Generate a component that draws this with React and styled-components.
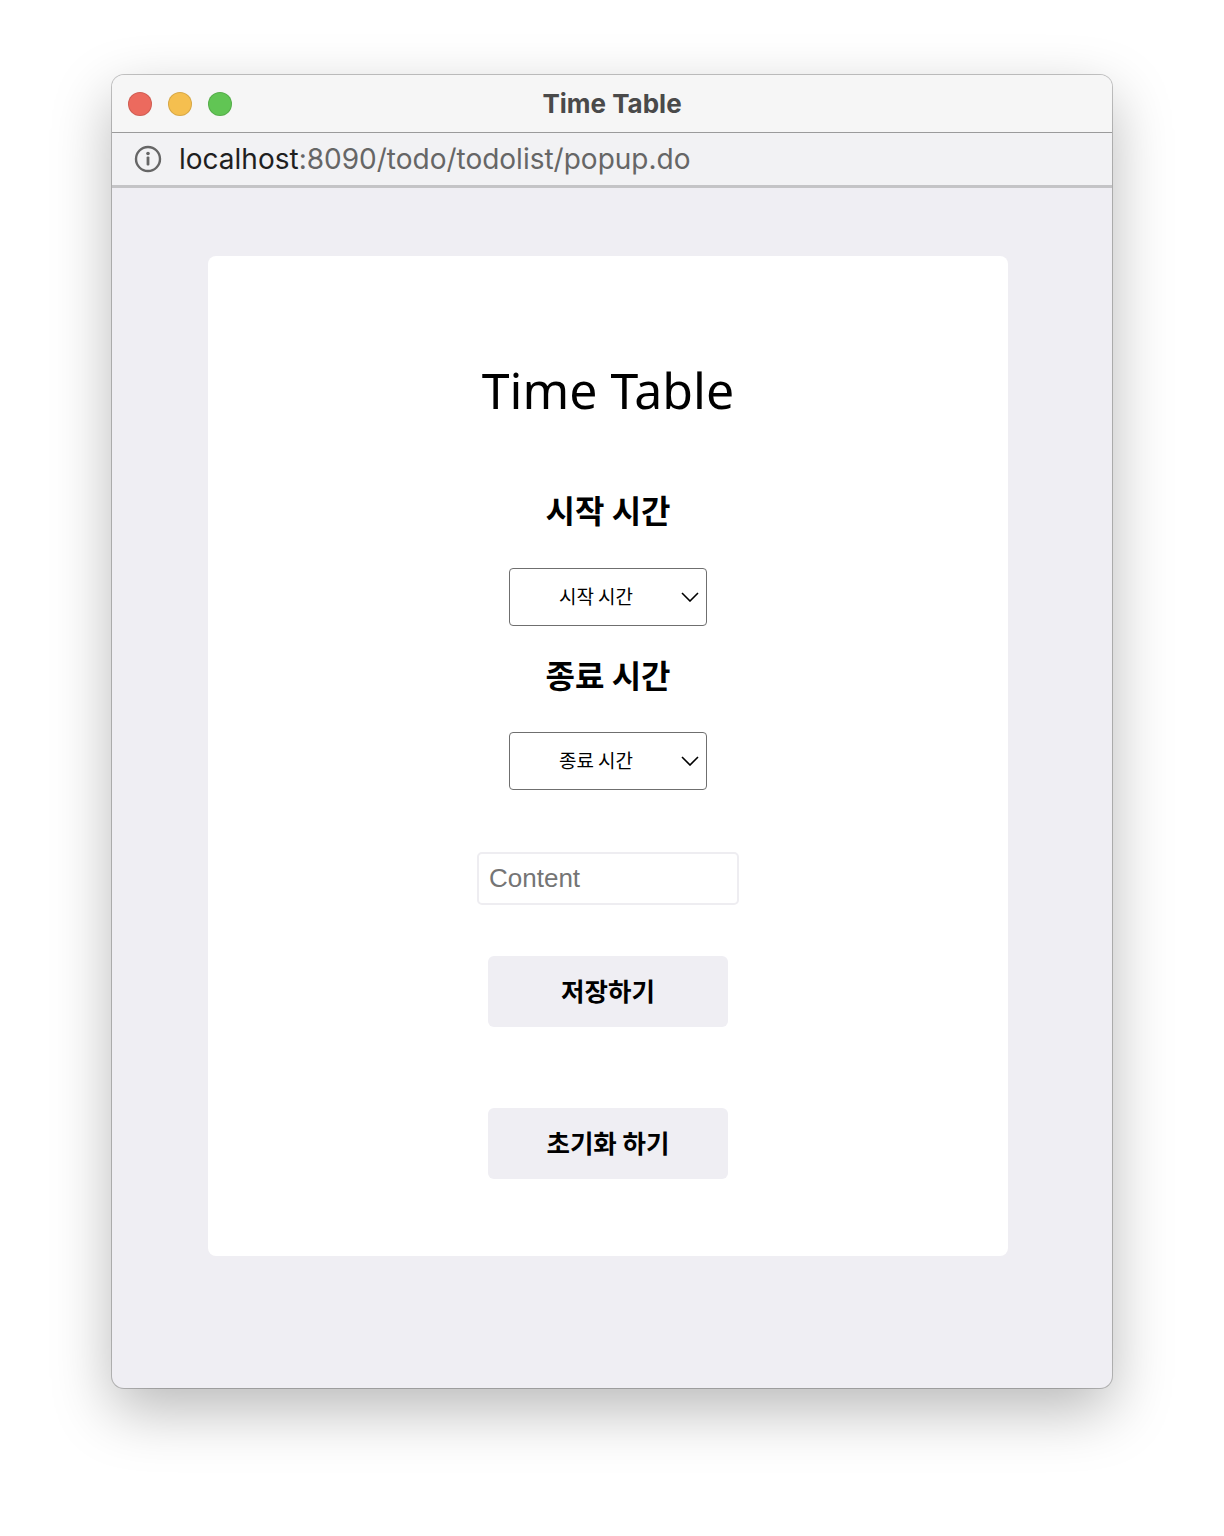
import React from "react";
import styled, { createGlobalStyle } from "styled-components";

const GlobalStyle = createGlobalStyle`
  html, body {
    margin: 0;
    padding: 0;
    background: #ffffff;
  }
  body {
    font-family: "Noto Sans", "Noto Sans CJK KR", sans-serif;
  }
`;

const Page = styled.div`
  width: 1224px;
  height: 1536px;
  padding: 75px 0 0 112px;
  box-sizing: border-box;
`;

const Window = styled.div`
  width: 1000px;
  height: 1313px;
  border-radius: 12px;
  overflow: hidden;
  display: flex;
  flex-direction: column;
  background: #efeef3;
  box-shadow: 0 0 0 1px rgba(0, 0, 0, 0.22), 0 22px 60px rgba(0, 0, 0, 0.28);
`;

const TitleBar = styled.div`
  height: 57px;
  flex-shrink: 0;
  display: flex;
  align-items: center;
  position: relative;
  background: #f6f6f6;
  border-bottom: 1px solid #9b9b9b;
`;

const Lights = styled.div`
  display: flex;
  gap: 16px;
  padding-left: 16px;
`;

const Light = styled.span`
  width: 24px;
  height: 24px;
  border-radius: 50%;
  background: ${(p) => p.$color};
  box-shadow: inset 0 0 0 1px rgba(0, 0, 0, 0.12);
`;

const WindowTitle = styled.div`
  position: absolute;
  left: 0;
  right: 0;
  text-align: center;
  font-family: "Inter", "Liberation Sans", sans-serif;
  font-weight: 700;
  font-size: 26px;
  color: #4a4a4a;
  pointer-events: none;
`;

const AddressBar = styled.div`
  height: 52px;
  flex-shrink: 0;
  display: flex;
  align-items: center;
  gap: 17px;
  padding-left: 22px;
  background: #f2f2f4;
  border-bottom: 3px solid #c4c4c6;
  font-family: "Inter", "Liberation Sans", sans-serif;
  font-size: 28px;
  color: #666666;
`;

const Host = styled.span`
  color: #1f1f1f;
`;

const Content = styled.div`
  flex: 1;
  padding: 68px 0 0 96px;
`;

const Card = styled.div`
  width: 800px;
  height: 1000px;
  background: #ffffff;
  border-radius: 8px;
  display: flex;
  flex-direction: column;
  align-items: center;
  padding-top: 96px;
  box-sizing: border-box;
`;

const Title = styled.h1`
  margin: 0;
  font-family: "Noto Sans", sans-serif;
  font-weight: 400;
  font-size: 50px;
  line-height: 76px;
  color: #000;
`;

const Label = styled.h3`
  margin: ${(p) => p.$top}px 0 0;
  font-family: "Noto Sans CJK KR", sans-serif;
  font-weight: 700;
  font-size: 32px;
  line-height: 40px;
  color: #000;
`;

const SelectWrap = styled.div`
  position: relative;
  margin-top: ${(p) => p.$top}px;
  width: 198px;
  height: 58px;
`;

const Select = styled.select`
  appearance: none;
  width: 100%;
  height: 100%;
  box-sizing: border-box;
  border: 1px solid #6f6f6f;
  border-radius: 4px;
  background: #fff;
  padding: 0 24px 3px 0;
  text-align: center;
  text-align-last: center;
  font-family: "Noto Sans CJK KR", sans-serif;
  font-size: 19px;
  color: #000;
  outline: none;
`;

const Chevron = styled.svg`
  position: absolute;
  right: 8px;
  top: 24px;
  pointer-events: none;
`;

const TextInput = styled.input`
  margin-top: 62px;
  width: 262px;
  height: 53px;
  box-sizing: border-box;
  border: 2px solid #eeedf1;
  border-radius: 5px;
  padding: 0 10px;
  font-family: "Liberation Sans", Arial, sans-serif;
  font-size: 26px;
  outline: none;
  &::placeholder {
    color: #757575;
  }
`;

const Button = styled.button`
  margin-top: ${(p) => p.$top}px;
  width: 240px;
  height: 71px;
  border: none;
  border-radius: 6px;
  background: #efeef3;
  padding: 0 0 5px;
  font-family: "Noto Sans CJK KR", sans-serif;
  font-weight: 700;
  font-size: 25.5px;
  color: #000;
  cursor: pointer;
`;

function TimeSelect({ label, top }) {
  return (
    <SelectWrap $top={top}>
      <Select defaultValue="">
        <option value="">{label}</option>
      </Select>
      <Chevron width="18" height="10" viewBox="0 0 18 10">
        <path d="M1 1 L9 9 L17 1" fill="none" stroke="#000" strokeWidth="1.6" />
      </Chevron>
    </SelectWrap>
  );
}

export default function App() {
  return (
    <>
      <GlobalStyle />
      <Page>
        <Window>
          <TitleBar>
            <Lights>
              <Light $color="#ec6a5e" />
              <Light $color="#f5bf4f" />
              <Light $color="#61c554" />
            </Lights>
            <WindowTitle>Time Table</WindowTitle>
          </TitleBar>
          <AddressBar>
            <svg width="28" height="28" viewBox="0 0 28 28">
              <circle cx="14" cy="14" r="12" fill="none" stroke="#666" strokeWidth="2.4" />
              <circle cx="14" cy="8.5" r="1.8" fill="#666" />
              <rect x="12.6" y="11.5" width="2.8" height="9" rx="1" fill="#666" />
            </svg>
            <span>
              <Host>localhost</Host>:8090/todo/todolist/popup.do
            </span>
          </AddressBar>
          <Content>
            <Card>
              <Title>Time Table</Title>
              <Label $top={61}>시작 시간</Label>
              <TimeSelect label="시작 시간" top={39} />
              <Label $top={28}>종료 시간</Label>
              <TimeSelect label="종료 시간" top={38} />
              <TextInput placeholder="Content" />
              <Button $top={51}>저장하기</Button>
              <Button $top={81}>초기화 하기</Button>
            </Card>
          </Content>
        </Window>
      </Page>
    </>
  );
}
